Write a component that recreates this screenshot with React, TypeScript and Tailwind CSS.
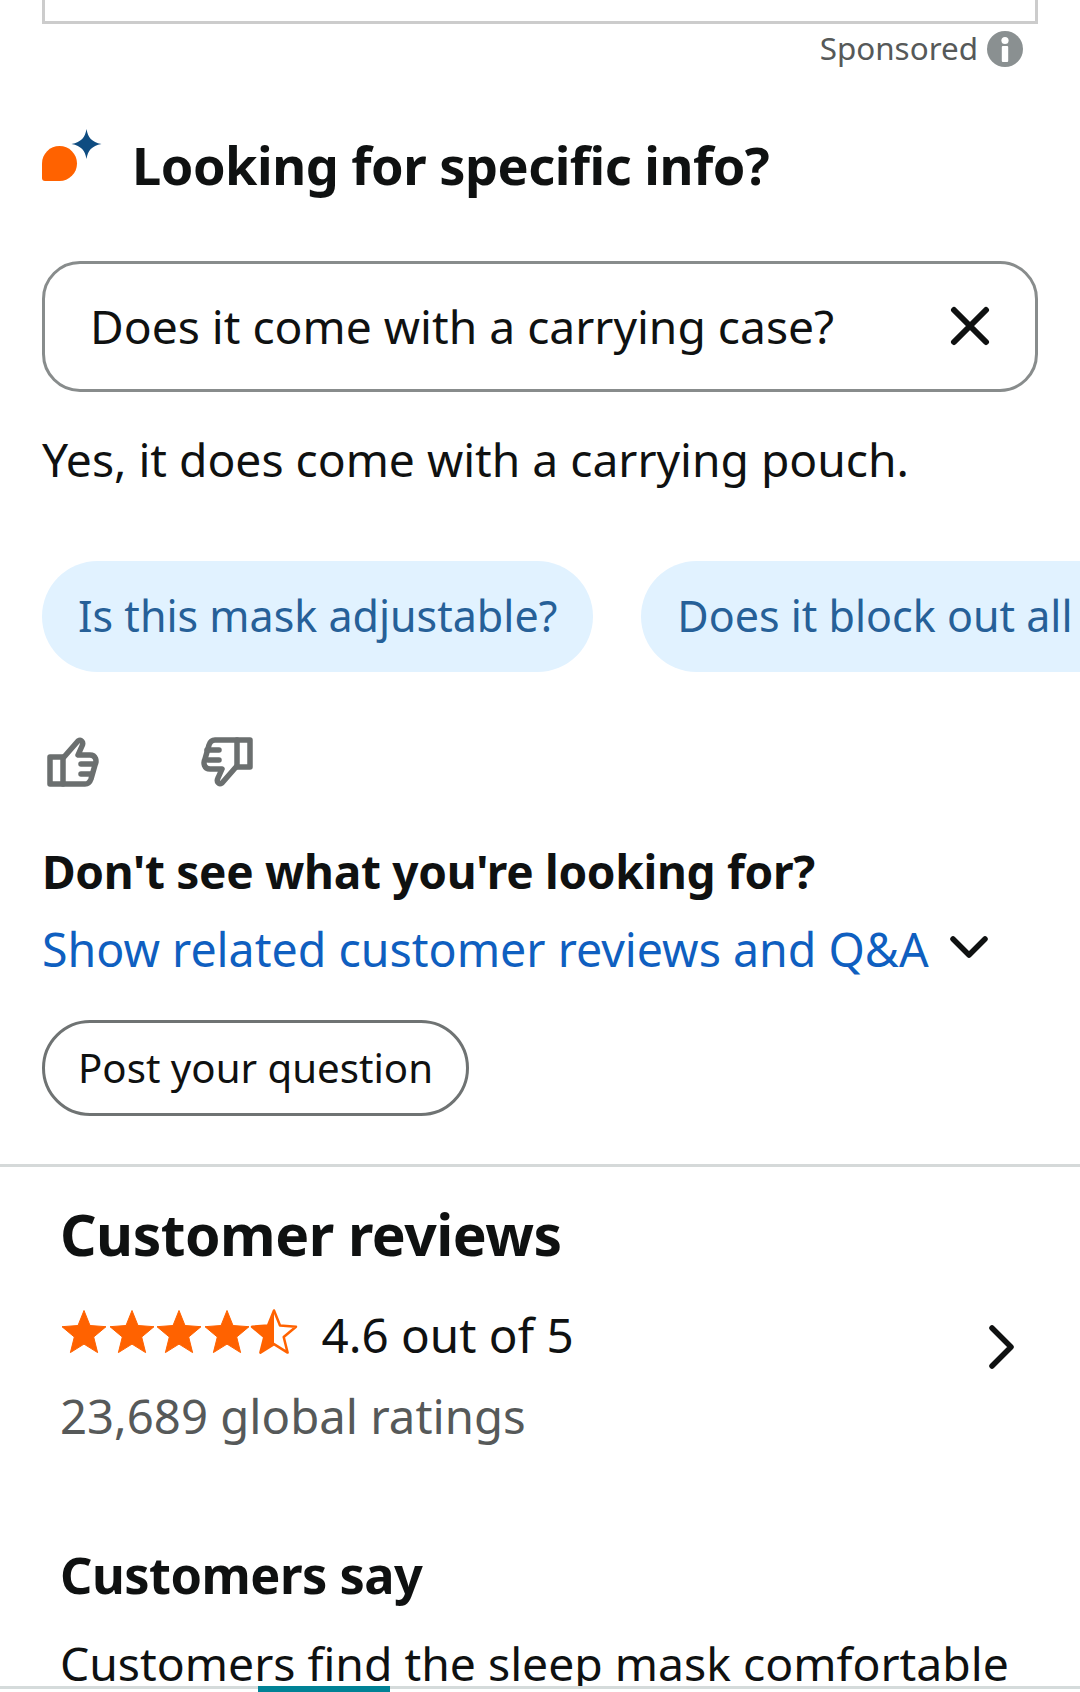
import React from "react";

const Star = ({ id, fill }: { id: string; fill: "full" | "half" }) => (
  <svg width="48" height="48" viewBox="0 0 48 48" className="-mr-[0.5px] block shrink-0">
    <defs>
      <linearGradient id={id}>
        <stop offset="50%" stopColor="#ff6200" />
        <stop offset="50%" stopColor="#ffffff" />
      </linearGradient>
    </defs>
    <path
      d="M24 3.5l6 15 16 1.2-12.300 10.300 3.900 15.600L24 37.100 10.400 45.600l3.900-15.600L2 19.700l16-1.200z"
      fill={fill === "full" ? "#ff6200" : `url(#${id})`}
      stroke="#ff6200"
      strokeWidth={fill === "full" ? 1 : 2.5}
      strokeLinejoin="round"
    />
  </svg>
);

export default function App() {
  return (
    <div
      className="relative h-[1692px] w-[1080px] overflow-hidden bg-white text-[#0f1111]"
      style={{ fontFamily: '"Noto Sans", sans-serif' }}
    >
      <div className="px-[42px]">
        <div className="h-[24px] border-x-[3px] border-b-[3px] border-[#cccccc]" />
        <div className="mt-[7px] flex items-center justify-end pr-[15px]">
          <span className="-mt-[2px] text-[31.4px] leading-[36px] text-[#565959]">Sponsored</span>
          <svg width="36" height="36" viewBox="0 0 36 36" className="ml-[9px]">
            <circle cx="18" cy="18" r="18" fill="#8a9091" />
            <circle cx="18" cy="9.500" r="3.600" fill="#fff" />
            <rect x="14.800" y="15" width="6.400" height="16" rx="1" fill="#fff" />
          </svg>
        </div>

        <div className="mt-[58px] flex h-[80px] items-center">
          <svg width="62" height="62" viewBox="0 0 62 62" className="-mt-[11px] shrink-0">
            <path
              d="M0 34.500a17.500 17.500 0 1 1 17.500 17.500H3a3 3 0 0 1-3-3z"
              fill="#ff6200"
            />
            <path d="M44.500 0c1.500 8.500 5 13 15 15-10 2-13.500 6.500-15 15-1.500-8.500-5-13-15-15 10-2 13.500-6.500 15-15z" fill="#0f4c81" />
          </svg>
          <h2 className="ml-[28px] text-[52.3px] font-bold leading-[60px] tracking-[-0.5px] text-[#0f1111]">
            Looking for specific info?
          </h2>
        </div>

        <div className="mt-[56px] flex h-[131px] items-center justify-between rounded-[38px] border-[3px] border-[#888c8c] pl-[45px] pr-[45px]">
          <span className="text-[46.2px] leading-[56px]">Does it come with a carrying case?</span>
          <svg width="40" height="40" viewBox="0 0 40 40" className="-mt-[2px]">
            <path d="M4 4l32 32M36 4L4 36" stroke="#0f1111" strokeWidth="6" strokeLinecap="round" fill="none" />
          </svg>
        </div>

        <p className="mt-[38px] text-[46.2px] leading-[60px]">Yes, it does come with a carrying pouch.</p>
      </div>

      <div className="mt-[71px] flex gap-[48px] pl-[42px]">
        <div className="flex h-[111px] shrink-0 items-center rounded-[56px] bg-[#e1f2ff] px-[36px] text-[43px] text-[#266098]">
          Is this mask adjustable?
        </div>
        <div className="flex h-[111px] shrink-0 items-center rounded-[56px] bg-[#e1f2ff] px-[36px] text-[43px] text-[#266098]">
          Does it block out all light?
        </div>
      </div>

      <div className="mt-[65px] flex gap-[102px] pl-[47px]">
        <svg width="52" height="50" viewBox="0 0 52 50" fill="none" stroke="#6b6f6f" strokeWidth="5.500" strokeLinejoin="round" strokeLinecap="round">
          <path d="M3 20h13v27H3z" />
          <path d="M17 20L31 4c3-2 6 1 4 5l-4 9h12c6 0 7 6 5 10l-4 14c-1 3-3 5-6 5H16" />
          <path d="M34 27h12M34 37h10" />
        </svg>
        <svg width="52" height="50" viewBox="0 0 52 50" fill="none" stroke="#6b6f6f" strokeWidth="5.500" strokeLinejoin="round" strokeLinecap="round">
          <path d="M49 30H36V3h13z" />
          <path d="M35 30L21 46c-3 2-6-1-4-5l4-9H9c-6 0-7-6-5-10L8 8c1-3 3-5 6-5h22" />
          <path d="M18 13H6M18 23H7" />
        </svg>
      </div>

      <div className="px-[42px]">
        <p className="mt-[57px] text-[46px] font-bold leading-[54px] tracking-[-0.3px]">Don't see what you're looking for?</p>
        <div className="mt-[24px] flex items-center">
          <span className="text-[46.5px] leading-[54px] text-[#0f5fc0]">Show related customer reviews and Q&amp;A</span>
          <svg width="38" height="24" viewBox="0 0 38 24" className="ml-[21px] -mt-[3px]">
            <path d="M3 3l16 16L35 3" fill="none" stroke="#0f1111" strokeWidth="5.500" strokeLinecap="round" strokeLinejoin="round" />
          </svg>
        </div>
        <div className="mt-[44px] flex h-[96px] w-[427px] items-center rounded-[48px] border-[3px] border-[#6f7373] pl-[33px] text-[40.2px]">
          Post your question
        </div>
      </div>

      <div className="mt-[48px] h-[3px] bg-[#d5d9d9]" />

      <div className="relative px-[60px]">
        <h2 className="mt-[34px] text-[57px] font-bold leading-[66px] tracking-[-0.5px]">Customer reviews</h2>
        <div className="mt-[40px] flex h-[56px] items-center">
          <div className="-mt-[8px] flex">
            <Star id="s1" fill="full" />
            <Star id="s2" fill="full" />
            <Star id="s3" fill="full" />
            <Star id="s4" fill="full" />
            <Star id="s5" fill="half" />
          </div>
          <span className="ml-[24px] text-[47.6px]">4.6 out of 5</span>
          <svg width="28" height="44" viewBox="0 0 28 44" className="absolute right-[64px] top-[124px]">
            <path d="M4 3l19 19L4 41" fill="none" stroke="#0f1111" strokeWidth="5.500" strokeLinecap="round" strokeLinejoin="round" />
          </svg>
        </div>
        <p className="mt-[25px] text-[47.3px] leading-[56px] text-[#565959]">23,689 global ratings</p>
        <h2 className="mt-[100px] text-[50.5px] font-bold leading-[62px] tracking-[-0.5px]">Customers say</h2>
        <p className="mt-[28px] whitespace-nowrap text-[46.3px] leading-[60px]">Customers find the sleep mask comfortable</p>
      </div>

      <div className="absolute bottom-0 left-0 h-[6px] w-full bg-white">
        <div className="h-[3px] w-full bg-[#d5dbdb]" />
        <div className="absolute left-[258px] top-0 h-full w-[132px] bg-[#008296]" />
      </div>
    </div>
  );
}
